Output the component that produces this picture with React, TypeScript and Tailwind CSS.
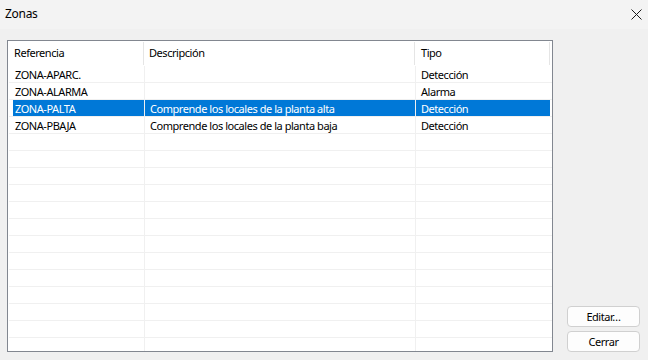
import React from "react";

type Zona = {
  ref: string;
  desc: string;
  tipo: string;
};

const zonas: Zona[] = [
  { ref: "ZONA-APARC.", desc: "", tipo: "Detección" },
  { ref: "ZONA-ALARMA", desc: "", tipo: "Alarma" },
  { ref: "ZONA-PALTA", desc: "Comprende los locales de la planta alta", tipo: "Detección" },
  { ref: "ZONA-PBAJA", desc: "Comprende los locales de la planta baja", tipo: "Detección" },
];

const SELECTED = 2;
const TOTAL_ROWS = 17;

function Row({ zona, selected }: { zona?: Zona; selected: boolean }) {
  const cell = selected ? "bg-[#0078d7] text-white" : "text-black";
  return (
    <div className="flex h-[17px] shrink-0 ml-[1px] border-b border-[#f0f0f0] leading-[17px]">
      <div className="w-[136px] shrink-0 border-r border-[#f0f0f0] pl-[4px]">
        <div className={`h-full pl-[2px] whitespace-nowrap ${cell}`}>{zona?.ref}</div>
      </div>
      <div className={`w-[271px] shrink-0 border-r border-[#f0f0f0] pl-[5px] whitespace-nowrap ${cell}`}>
        {zona?.desc}
      </div>
      <div className={`w-[134px] shrink-0 pl-[5px] whitespace-nowrap ${cell}`}>{zona?.tipo}</div>
    </div>
  );
}

export default function App() {
  const rows = Array.from({ length: TOTAL_ROWS }, (_, i) => zonas[i]);

  return (
    <div
      className="w-[648px] h-[360px] flex flex-col bg-[#f0f0f0] text-[11px] tracking-[-0.45px] text-black overflow-hidden"
      style={{ fontFamily: '"Noto Sans", "Open Sans", sans-serif' }}
    >
      {/* title bar */}
      <div className="h-[29px] shrink-0 flex items-center justify-between bg-[#f3f3f3] pl-[5px] pr-[6px]">
        <span className="leading-none mt-[-2px] text-[12px] tracking-[-0.3px]">Zonas</span>
        <svg width="11" height="11" viewBox="0 0 11 11">
          <path d="M0.5 0.5 L10.5 10.5 M10.5 0.5 L0.5 10.5" stroke="#1a1a1a" strokeWidth="1" />
        </svg>
      </div>

      <div className="flex pl-[7px] pt-[11px]">
        {/* list view */}
        <div className="w-[546px] h-[312px] border border-[#828790] bg-white flex flex-col overflow-hidden">
          <div className="flex h-[25px] shrink-0 items-center">
            <div className="w-[136px] h-[23px] shrink-0 border-r border-[#e5e5e5] pl-[6px] flex items-center">
              Referencia
            </div>
            <div className="w-[271px] h-[23px] shrink-0 border-r border-[#e5e5e5] pl-[5px] flex items-center">
              Descripción
            </div>
            <div className="w-[135px] h-[23px] shrink-0 border-r border-[#e5e5e5] pl-[6px] flex items-center">
              Tipo
            </div>
          </div>
          {rows.map((z, i) => (
            <Row key={i} zona={z} selected={i === SELECTED} />
          ))}
        </div>

        {/* buttons */}
        <div className="flex flex-col justify-end gap-[4px] ml-[14px]">
          <button
            type="button"
            className="w-[73px] h-[21px] rounded-[4px] border border-[#d0d0d0] bg-[#fdfdfd] leading-none"
          >
            Editar…
          </button>
          <button
            type="button"
            className="w-[73px] h-[21px] rounded-[4px] border border-[#d0d0d0] bg-[#fdfdfd] leading-none"
          >
            Cerrar
          </button>
        </div>
      </div>
    </div>
  );
}
